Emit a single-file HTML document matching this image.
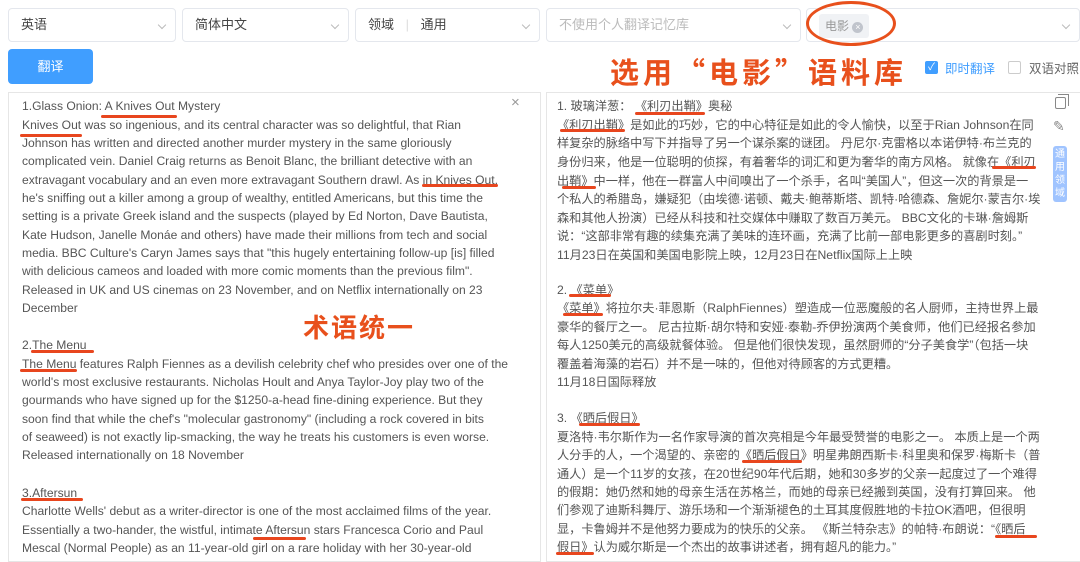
<!DOCTYPE html>
<html><head><meta charset="utf-8"><style>
*{margin:0;padding:0;box-sizing:border-box}
body{width:1080px;height:560px;overflow:hidden;background:#fff;font-family:"Liberation Sans","Noto Sans CJK SC",sans-serif;position:relative;color:#555}
.sel{position:absolute;top:8px;height:34px;border:1px solid #e4e7ed;border-radius:4px;font-size:13px;color:#444;line-height:32px;padding-left:12px}
.sel .ar{position:absolute;right:10px;top:13px;width:6px;height:6px;border-right:1px solid #bbb;border-bottom:1px solid #bbb;transform:rotate(45deg)}
.btn{position:absolute;left:8px;top:49px;width:85px;height:35px;background:#409eff;border-radius:4px;color:#fff;font-size:13px;text-align:center;line-height:35px}
.panel{position:absolute;top:92px;height:470px;border:1px solid #e6e6e6}
.l{position:absolute;font-size:12.1px;white-space:nowrap;line-height:18px;color:#555}
.r{position:absolute;font-size:12.2px;white-space:nowrap;line-height:18px;color:#555;font-family:"Liberation Sans","Noto Sans CJK SC",sans-serif}
.u{position:absolute;height:3px;background:#e8461e;border-radius:2px}
.big{position:absolute;color:#e8501c;font-weight:bold;font-family:"Noto Sans CJK SC",sans-serif}
</style></head><body>
<div class="sel" style="left:8px;width:168px">英语<span class="ar"></span></div>
<div class="sel" style="left:182px;width:167px">简体中文<span class="ar"></span></div>
<div class="sel" style="left:355px;width:185px">领域 <span style="color:#ddd;margin:0 8px">|</span> 通用<span class="ar"></span></div>
<div class="sel" style="left:546px;width:255px;color:#bbb">不使用个人翻译记忆库<span class="ar"></span></div>
<div class="sel" style="left:806px;width:274px"><span style="display:inline-block;background:#f0f2f5;color:#999;line-height:24px;height:24px;padding:0 6px;font-size:12px;border-radius:3px;vertical-align:middle">电影 <span style="display:inline-block;width:11px;height:11px;border-radius:50%;background:#c0c4cc;color:#fff;font-size:9px;line-height:11px;text-align:center">×</span></span><span class="ar"></span></div>
<div style="position:absolute;left:806px;top:1px;width:90px;height:45px;border:3px solid #e8501c;border-radius:50%"></div>
<div class="btn">翻译</div>
<div class="big" style="left:610px;top:50px;font-size:29px;letter-spacing:4px">选用“电影”语料库</div>
<div style="position:absolute;left:925px;top:61px;width:13px;height:13px;background:#409eff;border-radius:2px;color:#fff;font-size:10px;line-height:13px;text-align:center">✓</div>
<div style="position:absolute;left:945px;top:58px;font-size:12.5px;color:#409eff">即时翻译</div>
<div style="position:absolute;left:1008px;top:61px;width:13px;height:13px;border:1px solid #ccc;border-radius:2px"></div>
<div style="position:absolute;left:1029px;top:58px;font-size:12.5px;color:#666">双语对照</div>

<div class="panel" style="left:8px;width:533px"></div>
<div class="panel" style="left:546px;width:540px"></div>
<div style="position:absolute;left:511px;top:94px;color:#999;font-size:15px">×</div>

<div class="l" style="left:22px;top:97px">1.Glass Onion: A Knives Out Mystery</div>
<div class="l" style="left:22px;top:116px">Knives Out was so ingenious, and its central character was so delightful, that Rian</div>
<div class="l" style="left:22px;top:134px">Johnson has written and directed another murder mystery in the same gloriously</div>
<div class="l" style="left:22px;top:152px">complicated vein. Daniel Craig returns as Benoit Blanc, the brilliant detective with an</div>
<div class="l" style="left:22px;top:171px">extravagant vocabulary and an even more extravagant Southern drawl. As in Knives Out,</div>
<div class="l" style="left:22px;top:189px">he's sniffing out a killer among a group of wealthy, entitled Americans, but this time the</div>
<div class="l" style="left:22px;top:207px">setting is a private Greek island and the suspects (played by Ed Norton, Dave Bautista,</div>
<div class="l" style="left:22px;top:226px">Kate Hudson, Janelle Monáe and others) have made their millions from tech and social</div>
<div class="l" style="left:22px;top:244px">media. BBC Culture's Caryn James says that "this hugely entertaining follow-up [is] filled</div>
<div class="l" style="left:22px;top:262px">with delicious cameos and loaded with more comic moments than the previous film".</div>
<div class="l" style="left:22px;top:281px">Released in UK and US cinemas on 23 November, and on Netflix internationally on 23</div>
<div class="l" style="left:22px;top:299px">December</div>
<div class="l" style="left:22px;top:336px">2.The Menu</div>
<div class="l" style="left:22px;top:355px">The Menu features Ralph Fiennes as a devilish celebrity chef who presides over one of the</div>
<div class="l" style="left:22px;top:373px">world's most exclusive restaurants. Nicholas Hoult and Anya Taylor-Joy play two of the</div>
<div class="l" style="left:22px;top:391px">gourmands who have signed up for the $1250-a-head fine-dining experience. But they</div>
<div class="l" style="left:22px;top:410px">soon find that while the chef's "molecular gastronomy" (including a rock covered in bits</div>
<div class="l" style="left:22px;top:428px">of seaweed) is not exactly lip-smacking, the way he treats his customers is even worse.</div>
<div class="l" style="left:22px;top:446px">Released internationally on 18 November</div>
<div class="l" style="left:22px;top:484px">3.Aftersun</div>
<div class="l" style="left:22px;top:502px">Charlotte Wells' debut as a writer-director is one of the most acclaimed films of the year.</div>
<div class="l" style="left:22px;top:521px">Essentially a two-hander, the wistful, intimate Aftersun stars Francesca Corio and Paul</div>
<div class="l" style="left:22px;top:539px">Mescal (Normal People) as an 11-year-old girl on a rare holiday with her 30-year-old</div>
<div class="big" style="left:303px;top:308px;font-size:26px;letter-spacing:2px">术语统一</div>

<div class="u" style="left:101px;top:115px;width:76px"></div>
<div class="u" style="left:20px;top:134px;width:62px"></div>
<div class="u" style="left:422px;top:184px;width:76px"></div>
<div class="u" style="left:31px;top:350px;width:63px"></div>
<div class="u" style="left:20px;top:369px;width:57px"></div>
<div class="u" style="left:21px;top:498px;width:62px"></div>
<div class="u" style="left:253px;top:537px;width:53px"></div>

<div class="r" style="left:557px;top:97px">1. 玻璃洋葱：&nbsp;《利刃出鞘》奥秘</div>
<div class="r" style="left:557px;top:116px">《利刃出鞘》是如此的巧妙，它的中心特征是如此的令人愉快，以至于Rian Johnson在同</div>
<div class="r" style="left:557px;top:134px">样复杂的脉络中写下并指导了另一个谋杀案的谜团。 丹尼尔·克雷格以本诺伊特·布兰克的</div>
<div class="r" style="left:557px;top:153px">身份归来，他是一位聪明的侦探，有着奢华的词汇和更为奢华的南方风格。 就像在《利刃</div>
<div class="r" style="left:557px;top:172px">出鞘》中一样，他在一群富人中间嗅出了一个杀手，名叫“美国人”，但这一次的背景是一</div>
<div class="r" style="left:557px;top:190px">个私人的希腊岛，嫌疑犯（由埃德·诺顿、戴夫·鲍蒂斯塔、凯特·哈德森、詹妮尔·蒙吉尔·埃</div>
<div class="r" style="left:557px;top:209px">森和其他人扮演）已经从科技和社交媒体中赚取了数百万美元。 BBC文化的卡琳·詹姆斯</div>
<div class="r" style="left:557px;top:227px">说：“这部非常有趣的续集充满了美味的连环画，充满了比前一部电影更多的喜剧时刻。”</div>
<div class="r" style="left:557px;top:246px">11月23日在英国和美国电影院上映，12月23日在Netflix国际上上映</div>
<div class="r" style="left:557px;top:281px">2. 《菜单》</div>
<div class="r" style="left:557px;top:299px">《菜单》将拉尔夫·菲恩斯（RalphFiennes）塑造成一位恶魔般的名人厨师，主持世界上最</div>
<div class="r" style="left:557px;top:318px">豪华的餐厅之一。 尼古拉斯·胡尔特和安娅·泰勒-乔伊扮演两个美食师，他们已经报名参加</div>
<div class="r" style="left:557px;top:336px">每人1250美元的高级就餐体验。 但是他们很快发现，虽然厨师的“分子美食学”（包括一块</div>
<div class="r" style="left:557px;top:355px">覆盖着海藻的岩石）并不是一味的，但他对待顾客的方式更糟。</div>
<div class="r" style="left:557px;top:373px">11月18日国际释放</div>
<div class="r" style="left:557px;top:409px">3. 《晒后假日》</div>
<div class="r" style="left:557px;top:428px">夏洛特·韦尔斯作为一名作家导演的首次亮相是今年最受赞誉的电影之一。 本质上是一个两</div>
<div class="r" style="left:557px;top:446px">人分手的人，一个渴望的、亲密的《晒后假日》明星弗朗西斯卡·科里奥和保罗·梅斯卡（普</div>
<div class="r" style="left:557px;top:465px">通人）是一个11岁的女孩，在20世纪90年代后期，她和30多岁的父亲一起度过了一个难得</div>
<div class="r" style="left:557px;top:483px">的假期：她仍然和她的母亲生活在苏格兰，而她的母亲已经搬到英国，没有打算回来。 他</div>
<div class="r" style="left:557px;top:501px">们参观了迪斯科舞厅、游乐场和一个渐渐褪色的土耳其度假胜地的卡拉OK酒吧，但很明</div>
<div class="r" style="left:557px;top:520px">显，卡鲁姆并不是他努力要成为的快乐的父亲。 《斯兰特杂志》的帕特·布朗说：“《晒后</div>
<div class="r" style="left:557px;top:538px">假日》认为威尔斯是一个杰出的故事讲述者，拥有超凡的能力。”</div>

<div class="u" style="left:635px;top:112px;width:70px"></div>
<div class="u" style="left:560px;top:129px;width:65px"></div>
<div class="u" style="left:992px;top:166px;width:44px"></div>
<div class="u" style="left:562px;top:186px;width:34px"></div>
<div class="u" style="left:569px;top:294px;width:42px"></div>
<div class="u" style="left:563px;top:313px;width:40px"></div>
<div class="u" style="left:579px;top:423px;width:61px"></div>
<div class="u" style="left:742px;top:460px;width:60px"></div>
<div class="u" style="left:995px;top:535px;width:42px"></div>
<div class="u" style="left:556px;top:552px;width:38px"></div>

<div style="position:absolute;left:1055px;top:97px;width:11px;height:12px;border:1.5px solid #888;border-radius:2px"></div>
<div style="position:absolute;left:1058px;top:94px;width:11px;height:12px;border-top:1.5px solid #888;border-right:1.5px solid #888"></div>
<div style="position:absolute;left:1053px;top:118px;color:#888;font-size:14px">✎</div>
<div style="position:absolute;left:1053px;top:146px;width:14px;height:56px;background:#a0c4ff;border-radius:3px;color:#fff;font-size:10px;line-height:13px;text-align:center;padding-top:2px">通<br>用<br>领<br>域</div>
</body></html>
